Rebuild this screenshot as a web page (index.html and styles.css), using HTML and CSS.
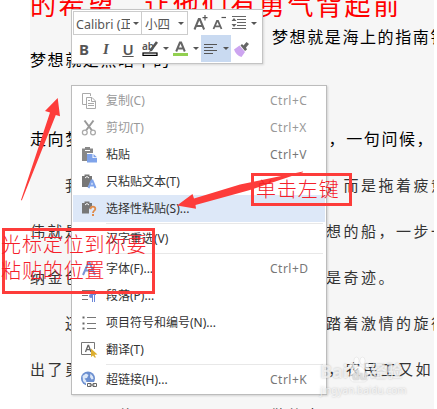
FILE: index.html
```
<!DOCTYPE html>
<html lang="zh-CN">

<head>
  <meta charset="UTF-8">
  <meta name="viewport" content="width=device-width, initial-scale=1.0">
  <title>选择性粘贴</title>
  <link rel="stylesheet" href="styles.css">
</head>

<body>
  <!-- 文档正文 -->
  <div class="doc">
    <div class="title">的希望，让他们有勇气背起前</div>
    <div class="line first"><span></span><span>梦想就是海上的指南针</span></div>
    <div class="line second"><span>梦想就是黑暗中的</span></div>
    <div class="line third"><span>走向梦</span><span>样，一句问候，</span></div>
    <div class="line indent"><span>我</span><span>，而是拖着疲惫</span></div>
    <div class="line"><span>伟就是</span><span>想的船，一步一步</span></div>
    <div class="line"><span>纳金色</span><span>是奇迹。</span></div>
    <div class="line indent"><span>还</span><span>踏着激情的旋律</span></div>
    <div class="line"><span>出了勇</span><span class="comma">，农民工又如</span></div>
    <div class="line last"><span>什</span><span>做的事</span></div>
  </div>

  <!-- 浮动工具栏 -->
  <div class="toolbar">
    <div class="row">
      <div class="combo font"><span>Calibri (正文)</span><i class="caret"></i></div>
      <div class="combo size"><span>小四</span><i class="caret"></i></div>
      <svg class="grow" width="18" height="20" viewBox="0 0 18 20">
        <path d="M2.5 16.5L6.8 6H7.8L12.1 16.5M4.2 13H10.4" fill="none" stroke="#666" stroke-width="2"/>
        <path d="M13 2V7.5M10.5 4.7H15.5" stroke="#555" stroke-width="1.2"/>
      </svg>
      <svg class="shrink" width="16" height="20" viewBox="0 0 16 20">
        <path d="M1.5 16L5 8H6L9.5 16M3 13.3H8" fill="none" stroke="#666" stroke-width="1.8"/>
        <path d="M9.5 4.5H14" stroke="#555" stroke-width="1.2"/>
      </svg>
      <svg class="spacing" width="16" height="16" viewBox="0 0 16 16">
        <path d="M1 1.5H15M6 4.5H15M6 7.5H15M6 10.5H15M1 13.5H15" stroke="#666"/>
        <path d="M3 3L5.5 6H0.5ZM3 12L0.5 9H5.5Z" fill="#666"/>
      </svg>
      <i class="caret"></i>
    </div>
    <div class="row">
      <span class="btn bold">B</span>
      <span class="btn italic">I</span>
      <span class="btn under">U</span>
      <svg class="mark" width="17" height="16" viewBox="0 0 17 16">
        <text x="0" y="9" class="ab">ab</text>
        <path d="M15 1L8.5 9.5" stroke="#555" stroke-width="2.6"/>
        <path d="M8.8 7.5L7 11L10.5 9.5Z" fill="#555"/>
        <rect x="1" y="12" width="14" height="2.4" fill="#fff" stroke="#000" stroke-width="1.2"/>
      </svg>
      <i class="caret"></i>
      <svg class="color" width="15" height="16" viewBox="0 0 15 16">
        <path d="M3.2 10.5L6.9 1.5H8.1L11.8 10.5M4.8 7.5H10" fill="none" stroke="#666" stroke-width="2"/>
        <rect x="0" y="12" width="15" height="3" fill="#92d050"/>
      </svg>
      <i class="caret"></i>
      <div class="align">
        <svg width="14" height="12" viewBox="0 0 14 12">
          <path d="M0 1.5H13M0 4.5H9M0 7.5H13M0 10.5H9" stroke="#555"/>
        </svg>
        <i class="caret"></i>
      </div>
      <svg class="brush" width="16" height="16" viewBox="0 0 16 16">
        <path d="M0 8.5L5.5 4.5L11 11L7.5 16C4 15 1 12 0 8.5Z" fill="#cda5f0"/>
        <path d="M6.5 4.5L8 3L9.5 4.5L12.5 1L15 3L12 6.5L13 8.5L11 10Z" fill="#666"/>
      </svg>
    </div>
  </div>

  <!-- 右键菜单 -->
  <div class="menu">
    <div class="item disabled">
      <svg width="16" height="16" viewBox="0 0 16 16">
        <path d="M4 11.5H0.5V0.5H8.5V3" fill="none" stroke="#aaa"/>
        <path d="M4.5 4.5H10L13.5 8V15.5H4.5Z" fill="#fff" stroke="#aaa"/>
        <path d="M9.5 4.5V8.5H13.5M6 7.5H8M6 10.5H12M6 12.5H12" fill="none" stroke="#aaa"/>
      </svg>
      <span class="label">复制(C)</span><span class="key">Ctrl+C</span>
    </div>
    <div class="item disabled">
      <svg width="16" height="16" viewBox="0 0 16 16">
        <path d="M2.5 0.5L10 10.5M11.5 0.5L4 10.5" stroke="#999" stroke-width="2"/>
        <circle cx="2.8" cy="12.5" r="2.4" fill="#fff" stroke="#aaa" stroke-width="1.3"/>
        <circle cx="11" cy="12.5" r="2.4" fill="#fff" stroke="#aaa" stroke-width="1.3"/>
      </svg>
      <span class="label">剪切(T)</span><span class="key">Ctrl+X</span>
    </div>
    <div class="item">
      <svg width="16" height="16" viewBox="0 0 16 16">
        <path d="M0 1.5H3V0H8V1.5H11V6H5V14H0Z" fill="#888"/>
        <path d="M3 3.5H8" stroke="#fff"/>
        <path d="M5 7H10.5V11H15V15.5H5ZM11.5 7L15 10.2H11.5Z" fill="#7fa3ea"/>
      </svg>
      <span class="label">粘贴</span><span class="key">Ctrl+V</span>
    </div>
    <div class="item">
      <svg width="16" height="16" viewBox="0 0 16 16">
        <path d="M0 2H2.5V0.5H7.5V2H10V6L6 13H0Z" fill="#777"/>
        <path d="M3 4L5 2.5L7 4" fill="none" stroke="#fff"/>
        <path d="M6.5 14L9.6 6.5H10.4L13.5 14M7.8 11.5H12.2" fill="none" stroke="#7fa3ea" stroke-width="2"/>
      </svg>
      <span class="label">只粘贴文本(T)</span>
    </div>
    <div class="item active">
      <svg width="16" height="16" viewBox="0 0 16 16">
        <path d="M0 2H2.5V0.5H7.5V2H10V5L7 8V12.5H0Z" fill="#777"/>
        <path d="M3 4L5 2.5L7 4" fill="none" stroke="#fff"/>
        <path d="M8.5 8.2C8.5 4.8 13.5 5 13.3 8C13.2 9.8 11 9.6 11 12" fill="none" stroke="#e08b4a" stroke-width="1.8"/>
        <rect x="10" y="13" width="2" height="2" fill="#e08b4a"/>
      </svg>
      <span class="label">选择性粘贴(S)...</span>
    </div>
    <div class="sep"></div>
    <div class="item">
      <i class="blank"></i>
      <span class="label">汉字重选(V)</span>
    </div>
    <div class="sep"></div>
    <div class="item">
      <svg width="16" height="16" viewBox="0 0 16 16">
        <path d="M1 14L6.5 1.5H7.5L13 14M3.5 9.5H10.5" fill="none" stroke="#7a94d6" stroke-width="2"/>
      </svg>
      <span class="label">字体(F)...</span><span class="key">Ctrl+D</span>
    </div>
    <div class="item">
      <svg width="16" height="16" viewBox="0 0 16 16">
        <path d="M0 2.5H13M0 7.5H6M0 11.5H6" stroke="#777"/>
        <path d="M14 6.5H9M10.5 6V14M12.5 6V14" stroke="#6d87d8"/>
        <circle cx="9" cy="8" r="2" fill="#6d87d8"/>
      </svg>
      <span class="label">段落(P)...</span>
    </div>
    <div class="item">
      <svg width="16" height="16" viewBox="0 0 16 16">
        <path d="M5 2.5H14M5 8.5H14M5 13.5H14" stroke="#777"/>
        <path d="M0.5 2.5H2.5M0.5 8.5H2.5M0.5 13.5H2.5" stroke="#666" stroke-width="2"/>
      </svg>
      <span class="label">项目符号和编号(N)...</span>
    </div>
    <div class="item">
      <svg width="16" height="16" viewBox="0 0 16 16">
        <path d="M9 12.5H-0.5V0.5H12.5V7" fill="none" stroke="#777"/>
        <path d="M3.5 10L6 3.5H6.6L9 10M4.5 7.7H8" fill="none" stroke="#666" stroke-width="1.3"/>
        <path d="M9 6.5L15.5 12.5L12.5 12.8L14 15.5H12.5L11 13.5L9 15Z" fill="#dcae2f"/>
      </svg>
      <span class="label">翻译(T)</span>
    </div>
    <div class="sep"></div>
    <div class="item">
      <svg width="16" height="16" viewBox="0 0 16 16">
        <circle cx="6" cy="6.5" r="7" fill="#6c8fd0"/>
        <path d="M0.5 4L4 1.5L6.5 3L5 6L2.5 6.5L4.5 9L3.5 11.5L1 9ZM8.5 1.5L11 4.5L11.5 7L9.5 7.5L8 5Z" fill="#dce8f8"/>
        <rect x="4" y="10" width="11.5" height="6" fill="#fff"/>
        <path d="M5.5 11.5H9V14.5H5.5ZM11 11.5H14.5V14.5H11ZM7.5 13H12.5" fill="none" stroke="#666"/>
      </svg>
      <span class="label">超链接(H)...</span><span class="key">Ctrl+K</span>
    </div>
  </div>

  <!-- 水印 -->
  <div class="watermark">
    <div class="brand">
      <span>Bai</span>
      <svg width="22" height="28" viewBox="0 0 22 28">
        <ellipse cx="4" cy="10" rx="2.4" ry="3.4"/>
        <ellipse cx="8.5" cy="4.8" rx="2.6" ry="3.8"/>
        <ellipse cx="14.5" cy="4.8" rx="2.6" ry="3.8"/>
        <ellipse cx="18.5" cy="10" rx="2.4" ry="3.4"/>
        <path d="M11 10C14.5 10 15.5 14 18.5 16.5C22 20 20 26 16 26H6C2 26 0 20 3.5 16.5C6.5 14 7.5 10 11 10Z"/>
        <text x="4" y="24" class="du">du</text>
      </svg>
      <span class="exp">经验</span>
    </div>
    <div class="site">jingyan.baidu.com</div>
  </div>

  <!-- 标注 -->
  <svg class="arrows" width="437" height="409" viewBox="0 0 437 409">
    <path d="M57.7 98L60 116.3L55.8 115L21.8 200.5L21 200L50 112.5L45 111Z"/>
    <path d="M177 205.5L192.5 194L194 198.5L240 184.5L303 171.5L303 172.3L250 190L195.5 205L196 208.8Z"/>
  </svg>
  <div class="note note-cursor"><p>光标定位到你要</p><p>粘贴的位置</p></div>
  <div class="note note-click"><p>单击左键</p></div>
</body>

</html>
```
FILE: styles.css
```
body {
  position: relative;
  width: 437px;
  height: 409px;
  margin: 0;
  overflow: hidden;
  background: #fff;
  font-family: "Noto Sans", "Noto Sans CJK SC", sans-serif;
}

/* 文档正文 */
.doc {
  width: 404px;
  height: 409px;
  margin-left: 30px;
  overflow: hidden;
  background: #f6f6f6;
  color: #333;
  font-family: "Noto Sans CJK SC", sans-serif;
  white-space: nowrap;
}

.title {
  height: 31px;
  margin-top: -11px;
  line-height: 30px;
  font-size: 26px;
  letter-spacing: 2.6px;
  color: #f00;
}

.line {
  display: grid;
  grid-template-columns: 296px auto;
  height: 46px;
  line-height: 46px;
  font-size: 15px;
  letter-spacing: 2.5px;
}

.line.first,
.line.second,
.line.third {
  font-size: 16px;
  letter-spacing: 1.6px;
  color: #000;
}

.line.first {
  grid-template-columns: 242px auto;
  height: 32px;
  line-height: 32px;
}

.line.second {
  height: 14px;
  margin-bottom: 50px;
  line-height: 14px;
}

.line.third {
  grid-template-columns: 281px auto;
  line-height: 45px;
}

.line.indent span:first-child {
  padding-left: 35px;
}

.line .comma {
  padding-left: 2px;
}

.line.last {
  grid-template-columns: 152px auto;
  padding-left: 88px;
}

/* 浮动工具栏 */
.toolbar {
  position: absolute;
  left: 71px;
  top: 9px;
  box-sizing: border-box;
  width: 192px;
  height: 55px;
  padding: 1px;
  border: 1px solid #c4c4c4;
  background: #fff;
  box-shadow: 1px 1px 2px rgba(0, 0, 0, 0.12);
}

.row {
  display: flex;
  align-items: center;
  height: 24px;
}

.row + .row {
  height: 27px;
}

.row svg {
  flex: none;
}

.caret {
  flex: none;
  border: 3px solid transparent;
  border-top-color: #555;
  border-bottom: 0;
}

.combo {
  display: flex;
  align-items: center;
  justify-content: space-between;
  box-sizing: border-box;
  height: 24px;
  padding: 0 3px;
  border: 1px solid #ccc;
  font-size: 12.5px;
  color: #555;
}

.combo span {
  overflow: hidden;
  white-space: nowrap;
}

.combo.font {
  width: 69px;
  padding: 0 2px;
}

.combo.font span {
  width: 54px;
}

.combo.size {
  width: 46px;
  border-left: 0;
}

.grow {
  margin-left: 4px;
}

.shrink {
  margin-left: 2px;
}

.spacing {
  margin: 0 4px 0 3px;
}

.btn {
  width: 22px;
  text-align: center;
  font-size: 15px;
  line-height: 20px;
  color: #555;
}

.btn.bold {
  font-weight: 700;
}

.btn.italic {
  font-family: "Liberation Serif", serif;
  font-style: italic;
  font-weight: 700;
}

.btn.under {
  font-weight: 600;
  text-decoration: underline;
}

.mark {
  margin: 0 4px 0 3px;
}

.ab {
  font: 600 10px "Noto Sans", sans-serif;
  fill: #555;
}

.color {
  margin: 0 5px 0 4px;
}

.align {
  display: flex;
  align-items: center;
  justify-content: space-between;
  box-sizing: border-box;
  width: 30px;
  height: 27px;
  margin-left: 2px;
  padding: 0 2px 0 3px;
  background: #c9daf1;
}

.brush {
  margin-left: 3px;
}

/* 右键菜单 */
.menu {
  position: absolute;
  left: 71px;
  top: 85px;
  box-sizing: border-box;
  width: 256px;
  height: 310px;
  padding: 1px;
  border: 1px solid #bcbcbc;
  background: #fff;
  box-shadow: 1px 1px 2px rgba(0, 0, 0, 0.15);
}

.item {
  display: flex;
  align-items: center;
  height: 27px;
  padding-left: 9px;
  font-size: 12px;
  line-height: 16px;
  color: #333;
  white-space: nowrap;
}

.item svg,
.blank {
  flex: none;
  width: 16px;
  overflow: visible;
}

.label {
  width: 164px;
  margin-left: 8px;
}

.key {
  color: #777;
  letter-spacing: 0.5px;
}

.item.disabled,
.item.disabled .key {
  color: #999;
}

.item.active {
  background: #dde8f8;
}

.sep {
  height: 1px;
  margin: 1px 2px 1px 33px;
  background: #e8e8e8;
}

/* 标注 */
.arrows {
  position: absolute;
  left: 0;
  top: 0;
  fill: #fd3c3a;
}

.note {
  position: absolute;
  box-sizing: border-box;
  border: 3px solid #fd3c3a;
  color: #f5202a;
  font-family: "Noto Sans CJK SC", sans-serif;
  font-size: 20px;
  font-weight: 300;
  letter-spacing: 0.9px;
  line-height: 26px;
  white-space: nowrap;
}

.note p {
  margin: 0;
}

.note-cursor {
  left: 2px;
  top: 228px;
  width: 153px;
  height: 66px;
}

.note-cursor p {
  margin-left: -4px;
}

.note-click {
  left: 251px;
  top: 173px;
  width: 101px;
  height: 33px;
  padding-left: 2px;
}

/* 水印 */
.watermark {
  position: absolute;
  left: 320px;
  top: 354px;
  width: 90px;
  color: rgba(255, 255, 255, 0.7);
  text-shadow: 0 0 2px rgba(0, 0, 0, 0.25);
}

.brand {
  display: flex;
  align-items: flex-end;
  height: 30px;
  font-size: 18px;
  font-weight: 700;
  line-height: 25px;
}

.brand svg {
  flex: none;
  fill: rgba(255, 255, 255, 0.7);
  stroke: #ddd;
  stroke-width: 0.5;
}

.brand .du {
  font-size: 12px;
  fill: #ddd;
  stroke: none;
}

.brand .exp {
  font-size: 16px;
}

.site {
  font-size: 10px;
  line-height: 12px;
}
```
